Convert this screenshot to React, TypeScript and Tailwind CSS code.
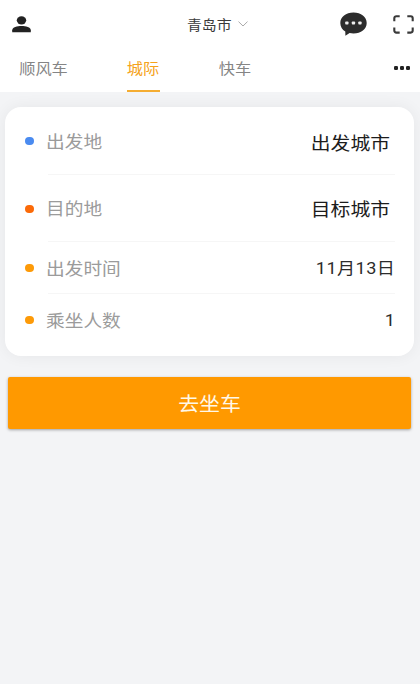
import { clsx } from "clsx";

const TABS = [
  { label: "顺风车", className: "ml-[19px] w-[49px]" },
  { label: "城际", className: "ml-[59px] w-[33px]", active: true },
  { label: "快车", className: "ml-[59px] w-[33px]" },
];

interface TripRow {
  label: string;
  value: string;
  dot: string;
  height: string;
  valueStyle: string;
}

const ROWS: TripRow[] = [
  { label: "出发地", value: "出发城市", dot: "bg-[#4a8bf0]", height: "h-[68px]", valueStyle: "mr-[5px] pt-[5px] text-[18px] scale-x-[1.1] text-[#1c1c1c]" },
  { label: "目的地", value: "目标城市", dot: "bg-[#fb6a08]", height: "h-[67px]", valueStyle: "mr-[5px] pt-[3px] text-[18px] scale-x-[1.1] text-[#1c1c1c]" },
  { label: "出发时间", value: "11月13日", dot: "bg-[#fd9a08]", height: "h-[52px]", valueStyle: "pt-[3px] text-[16px] tracking-[0.4px] -mr-[0.4px] scale-x-[1.13] text-[#2c2c2c]" },
  { label: "乘坐人数", value: "1", dot: "bg-[#fd9a08]", height: "h-[52px]", valueStyle: "pt-[2px] text-[16px] scale-x-[1.13] text-[#2c2c2c]" },
];

function UserIcon() {
  return (
    <svg className="ml-3 h-[17px] w-[19px]" viewBox="0 0 19 17" fill="#222">
      <ellipse cx="9.5" cy="4.3" rx="4.7" ry="4.1" />
      <path d="M0.2 16.2v-2c0-2.9 5-4.2 9.3-4.2s9.3 1.3 9.3 4.2v2z" />
    </svg>
  );
}

function ChatIcon() {
  return (
    <svg className="h-6 w-[27px]" viewBox="0 0 27 24">
      <path
        fill="#2c2c2c"
        d="M13.5 0.6C6 0.6 0.3 5 0.3 11c0 3.6 1.9 6.6 5 8.6l0.1 4.2 4.2-2.7c1.2 0.3 2.5 0.4 3.9 0.4 7.5 0 13.2-4.5 13.2-10.5S21 0.6 13.5 0.6z"
      />
      <g fill="#eee">
        <rect x="5.2" y="9.5" width="3.3" height="3" rx="0.8" />
        <rect x="11.8" y="9.5" width="3.3" height="3" rx="0.8" />
        <rect x="18.3" y="9.5" width="3.3" height="3" rx="0.8" />
      </g>
    </svg>
  );
}

function ScanIcon() {
  return (
    <svg className="ml-[26px] h-[19px] w-[21px]" viewBox="0 0 21 19" fill="none" stroke="#3a3a3a" strokeWidth="2.1">
      <path d="M1.3 6.2V3.2a2 2 0 0 1 2-2h3.4M14.3 1.2h3.4a2 2 0 0 1 2 2v3M19.7 12.4v3.2a2 2 0 0 1-2 2h-3.4M6.7 17.6H3.3a2 2 0 0 1-2-2v-3.2" />
    </svg>
  );
}

function Header() {
  return (
    <header className="grid h-12 grid-cols-[1fr_62px_1fr] items-center">
      <UserIcon />
      <div className="flex items-center gap-[7px] pl-2">
        <span className="w-[44px] shrink-0 origin-left scale-x-[1.06] pt-[3px] text-[14px] whitespace-nowrap text-[#3a3a3a]">青岛市</span>
        <svg className="h-[6px] w-[10px] shrink-0" viewBox="0 0 10 6" fill="none" stroke="#aaa" strokeWidth="1">
          <path d="M0.5 0.6 5 5 9.5 0.6" />
        </svg>
      </div>
      <div className="flex items-center justify-end pr-[6px]">
        <ChatIcon />
        <ScanIcon />
      </div>
    </header>
  );
}

function TabBar() {
  return (
    <nav className="flex h-11 items-stretch">
      {TABS.map((tab) => (
        <button
          key={tab.label}
          className={clsx(
            "flex items-center justify-center border-b-2 text-[15px] whitespace-nowrap",
            tab.className,
            tab.active ? "border-[#f5ad32] text-[#f5a31c]" : "border-transparent text-[#858585]"
          )}
        >
          <span className="scale-x-[1.08]">{tab.label}</span>
        </button>
      ))}
      <svg className="mt-[18px] mr-[10px] ml-auto h-[4px] w-[16px]" viewBox="0 0 16 4" fill="#222">
        <rect width="4" height="4" rx="1.3" />
        <rect x="6" width="4" height="4" rx="1.3" />
        <rect x="12" width="4" height="4" rx="1.3" />
      </svg>
    </nav>
  );
}

function TripCard() {
  return (
    <section className="mt-[15px] mr-[6px] ml-[5px] h-[249px] rounded-2xl bg-white shadow-[0_0_16px_rgba(0,0,0,0.06)]">
      {ROWS.map((row, i) => (
        <div key={row.label} className={clsx("flex items-center pl-5", row.height)}>
          <span className={clsx("h-2 w-[9px] shrink-0 rounded-full", row.dot)} />
          <div
            className={clsx(
              "mr-[19px] ml-[14px] flex h-full flex-1 items-center justify-between border-b",
              i < ROWS.length - 1 ? "border-[#f6f6f6]" : "border-transparent"
            )}
          >
            <span className="-ml-[2.5px] origin-left scale-x-[1.1] pt-1 text-[17px] text-[#9b9b9b]">{row.label}</span>
            <span className={clsx("origin-right", row.valueStyle)}>{row.value}</span>
          </div>
        </div>
      ))}
    </section>
  );
}

export default function App() {
  return (
    <div className="min-h-[684px] w-[420px] overflow-hidden bg-[#f3f4f6] font-['Roboto','Noto_Sans_CJK_SC',sans-serif]">
      <div className="bg-white">
        <Header />
        <TabBar />
      </div>
      <TripCard />
      <button className="mt-[21px] ml-[7.5px] flex h-[52px] w-[403.5px] items-center justify-center rounded-[2px] bg-[#ff9900] pt-1 text-[19px] text-[#fff8e8] shadow-[0_1px_3px_rgba(0,0,0,0.35)]">
        <span className="scale-x-[1.1]">去坐车</span>
      </button>
    </div>
  );
}
